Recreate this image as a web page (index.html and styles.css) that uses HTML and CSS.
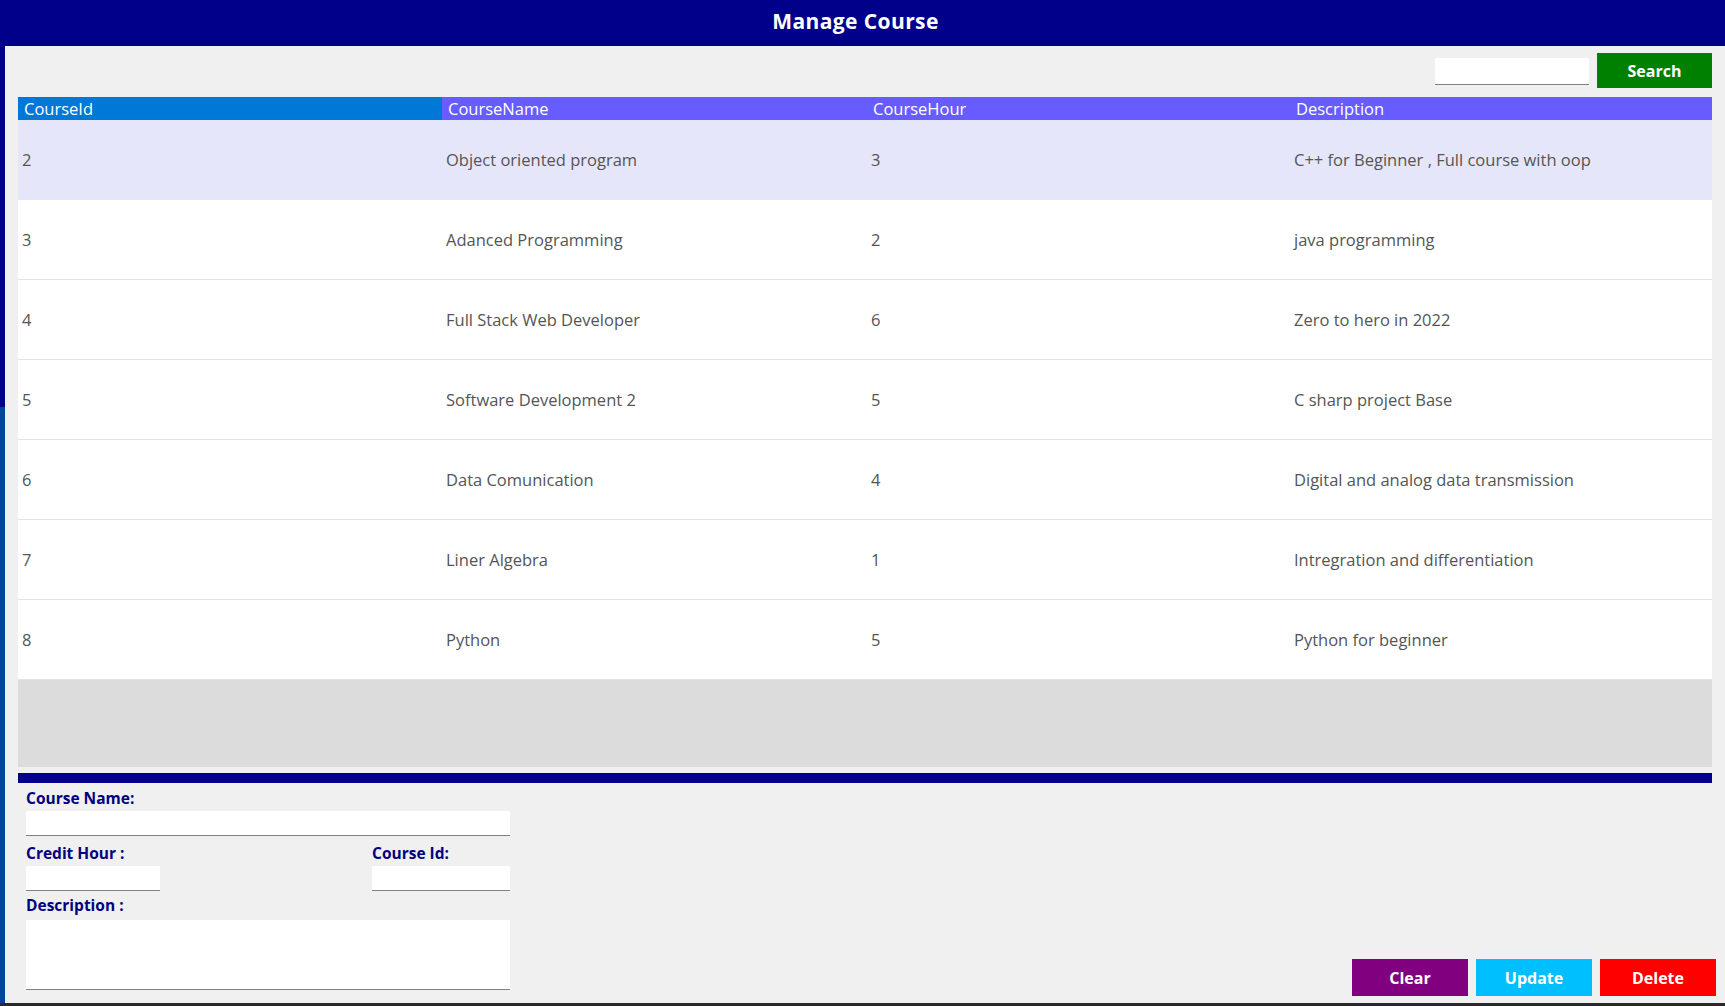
FILE: index.html
```html
<!DOCTYPE html>
<html>
<head>
<meta charset="utf-8">
<title>Manage Course</title>
<link rel="stylesheet" href="styles.css">
</head>
<body>
<div class="app">
  <header class="titlebar">Manage Course</header>
  <div class="frame">
    <div class="strip"><div class="strip-top"></div><div class="strip-bottom"></div></div>
    <main class="main">
      <div class="searchbar">
        <input class="search-input" type="text">
        <button class="btn btn-search">Search</button>
      </div>
      <div class="grid">
        <div class="grid-head">
          <div class="hcell hcell-first">CourseId</div>
          <div class="hcell">CourseName</div>
          <div class="hcell">CourseHour</div>
          <div class="hcell">Description</div>
        </div>
        <div class="grid-row selected"><div class="cell">2</div><div class="cell">Object oriented program</div><div class="cell">3</div><div class="cell">C++ for Beginner , Full course with oop</div></div>
        <div class="grid-row"><div class="cell">3</div><div class="cell">Adanced Programming</div><div class="cell">2</div><div class="cell">java programming</div></div>
        <div class="grid-row"><div class="cell">4</div><div class="cell">Full Stack Web Developer</div><div class="cell">6</div><div class="cell">Zero to hero in 2022</div></div>
        <div class="grid-row"><div class="cell">5</div><div class="cell">Software Development 2</div><div class="cell">5</div><div class="cell">C sharp project Base</div></div>
        <div class="grid-row"><div class="cell">6</div><div class="cell">Data Comunication</div><div class="cell">4</div><div class="cell">Digital and analog data transmission</div></div>
        <div class="grid-row"><div class="cell">7</div><div class="cell">Liner Algebra</div><div class="cell">1</div><div class="cell">Intregration and differentiation</div></div>
        <div class="grid-row"><div class="cell">8</div><div class="cell">Python</div><div class="cell">5</div><div class="cell">Python for beginner</div></div>
      </div>
      <div class="divider"></div>
      <div class="lower">
        <form class="form">
          <label class="lbl">Course Name:</label>
          <input class="field field-name" type="text">
          <div class="pair">
            <div class="pair-col">
              <label class="lbl">Credit Hour :</label>
              <input class="field field-hour" type="text">
            </div>
            <div class="pair-col">
              <label class="lbl">Course Id:</label>
              <input class="field field-id" type="text">
            </div>
          </div>
          <label class="lbl lbl-desc">Description :</label>
          <textarea class="field field-desc"></textarea>
        </form>
        <div class="actions">
          <button class="btn btn-clear">Clear</button>
          <button class="btn btn-update">Update</button>
          <button class="btn btn-delete">Delete</button>
        </div>
      </div>
    </main>
  </div>
</div>
</body>
</html>
```
FILE: styles.css
```css
* { box-sizing: border-box; }
html, body { margin: 0; padding: 0; }
body {
  width: 1725px;
  height: 1006px;
  overflow: hidden;
  background: #f0f0f0;
  font-family: "Open Sans", "Liberation Sans", sans-serif;
}
.app {
  display: flex;
  flex-direction: column;
  height: 1006px;
  border-bottom: 3px solid #2a2a2a;
}
.titlebar {
  height: 46px;
  flex: none;
  background: #00008b;
  color: #fff;
  font-weight: 700;
  font-size: 21px;
  display: flex;
  align-items: center;
  justify-content: center;
  letter-spacing: 0.4px;
  padding: 0 14px 4px 0;
}
.frame {
  flex: 1;
  display: flex;
  min-height: 0;
}
.strip {
  width: 5px;
  flex: none;
  display: flex;
  flex-direction: column;
}
.strip-top { height: 361px; background: #00008b; }
.strip-bottom { flex: 1; background: #00459a; }
.main {
  flex: 1;
  display: flex;
  flex-direction: column;
  padding: 7px 13px 0 13px;
}
.searchbar {
  display: flex;
  justify-content: flex-end;
  align-items: center;
  gap: 8px;
  height: 35px;
  margin-bottom: 9px;
}
.search-input {
  width: 154px;
  height: 27px;
  border: none;
  border-bottom: 1px solid #808080;
  background: #fff;
  margin-top: 1px;
}
.btn {
  border: none;
  color: #fff;
  font-family: "Open Sans", "Liberation Sans", sans-serif;
  font-weight: 700;
  font-size: 16px;
  padding: 0;
}
.btn-search {
  width: 115px;
  height: 35px;
  background: #008000;
}
.grid {
  width: 1694px;
  height: 670px;
  background: #dcdcdc;
  flex: none;
}
.grid-head {
  display: grid;
  grid-template-columns: 424px 425px 423px 422px;
  height: 23px;
  background: #675cff;
}
.hcell {
  color: #fff;
  font-size: 16.5px;
  line-height: 23px;
  padding-left: 6px;
  white-space: nowrap;
}
.hcell-first { background: #0078d7; }
.grid-row {
  display: grid;
  grid-template-columns: 424px 425px 423px 422px;
  height: 80px;
  background: #fff;
  border-bottom: 1px solid #e3e3e3;
  align-items: center;
}
.grid-row.selected { background: #e6e6fa; border-bottom-color: #e6e6fa; }
.cell {
  color: #555555;
  font-size: 16.5px;
  padding-left: 4px;
  white-space: nowrap;
}
.divider {
  width: 1694px;
  height: 10px;
  background: #00008b;
  margin-top: 6px;
  flex: none;
}
.lower {
  flex: 1;
  display: flex;
  justify-content: space-between;
  align-items: flex-end;
  padding: 6px 0 7px 8px;
  margin-right: -4px;
}
.form {
  display: flex;
  flex-direction: column;
  width: 484px;
  align-self: flex-start;
}
.lbl {
  display: block;
  color: #000080;
  font-weight: 700;
  font-size: 15.5px;
  line-height: 18px;
  height: 18px;
}
.field {
  display: block;
  border: none;
  border-bottom: 1px solid #808080;
  background: #fff;
  height: 25px;
  margin-top: 4px;
  font-family: inherit;
}
.field-name { width: 484px; margin-bottom: 8px; }
.pair {
  display: flex;
  justify-content: space-between;
  margin-bottom: 5px;
}
.pair-col { display: flex; flex-direction: column; }
.field-hour { width: 134px; }
.field-id { width: 138px; }
.lbl-desc { margin-bottom: 2px; }
.field-desc {
  width: 484px;
  height: 70px;
  resize: none;
}
.actions {
  display: flex;
  gap: 8px;
}
.actions .btn {
  width: 116px;
  height: 37px;
}
.btn-clear { background: #800080; }
.btn-update { background: #00bfff; }
.btn-delete { background: #ff0000; }
```
